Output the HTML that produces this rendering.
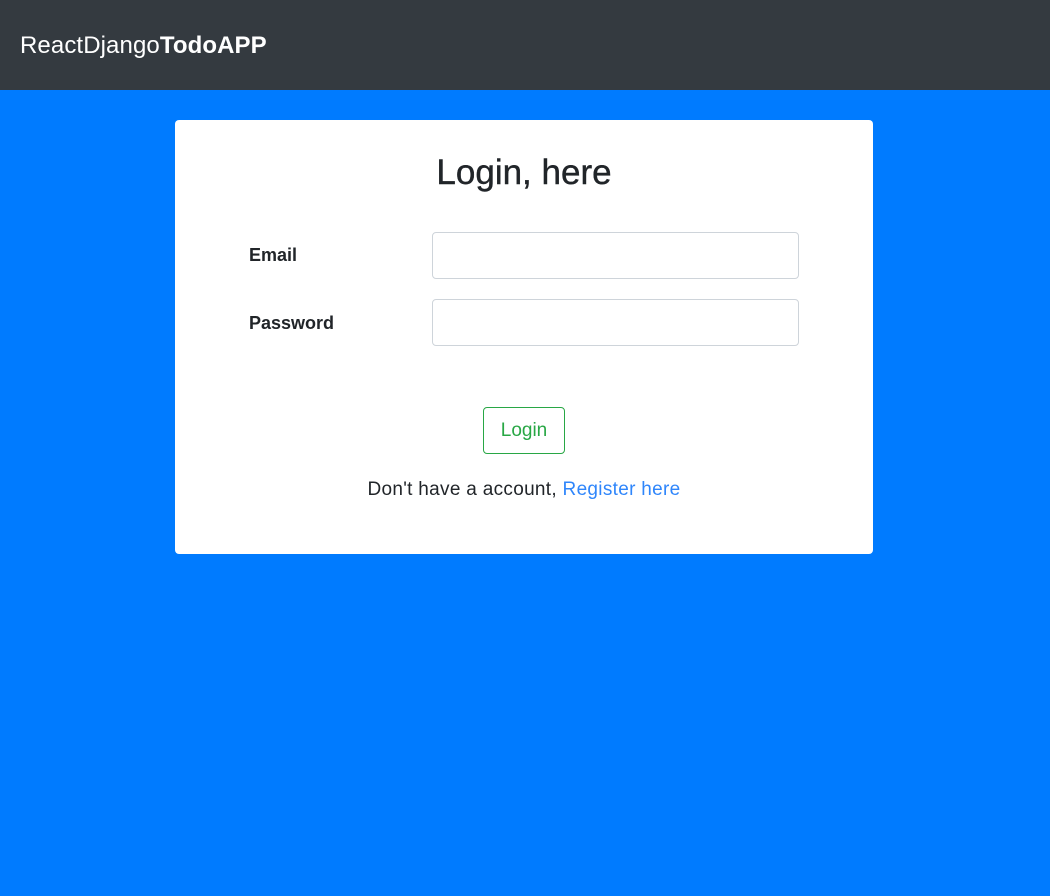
<!DOCTYPE html>
<html><head><style>
html,body{margin:0;padding:0;width:1050px;height:896px;background:#007bff;font-family:"Liberation Sans",sans-serif;overflow:hidden}
.nav{height:90px;background:#343a40;color:#fff;font-size:24px;line-height:92px;padding-left:20px;letter-spacing:0.1px}
.card{position:absolute;left:175px;top:120px;width:698px;height:434px;background:#fff;border-radius:4px}
h1{position:absolute;top:153px;left:0;width:1048px;text-align:center;margin:0;font-size:35px;font-weight:normal;color:#212529;line-height:40px;-webkit-text-stroke:0.4px #212529}
.lbl{position:absolute;left:249px;font-weight:bold;font-size:18px;color:#212529}
.inp{position:absolute;left:432px;width:365px;height:45px;border:1px solid #ced4da;border-radius:4px;background:#fff}
.btn{position:absolute;left:483px;top:407px;border:1px solid #28a745;border-radius:4px;color:#28a745;font-size:19px;text-align:center;line-height:46px;box-sizing:border-box;width:82px;height:47px}
.reg{position:absolute;top:479px;left:0;width:1048px;text-align:center;font-size:19px;letter-spacing:0.3px;color:#212529}
.reg span{color:#2f86fb}
</style></head><body>
<div class="nav">ReactDjango<b>TodoAPP</b></div>
<div class="card"></div>
<h1>Login, here</h1>
<div class="lbl" style="top:245px">Email</div>
<div class="inp" style="top:232px"></div>
<div class="lbl" style="top:313px">Password</div>
<div class="inp" style="top:299px"></div>
<div class="btn">Login</div>
<div class="reg">Don't have a account, <span>Register here</span></div>
</body></html>
